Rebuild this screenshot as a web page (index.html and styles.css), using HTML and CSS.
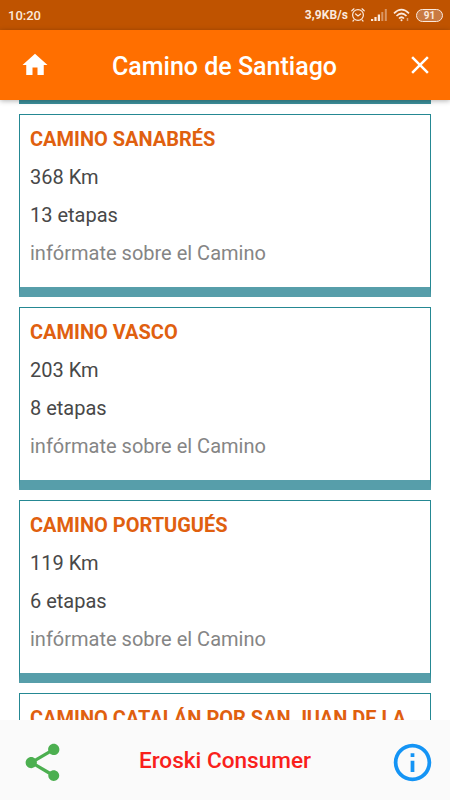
FILE: index.html
```html
<!DOCTYPE html>
<html lang="es">
<head>
<meta charset="utf-8">
<title>Camino de Santiago</title>
<link rel="stylesheet" href="styles.css">
</head>
<body>
<div class="app">
  <div class="status">
    <span class="clock">10:20</span>
    <span class="speed">3,9KB/s</span>
    <svg class="alarm" width="16" height="16" viewBox="0 0 16 16" fill="none" stroke="#fbe9dd" stroke-width="1.2" stroke-linecap="round"><circle cx="8" cy="8" r="5.4"/><path d="M1.8 3.8L4 1.8M14.2 3.8L12 1.8M3.8 13.2L3 14M12.2 13.2L13 14M5.6 7L8 9l2.6-2"/></svg>
    <svg class="signal" width="16" height="12" viewBox="0 0 16 12" fill="#fbe9dd"><path d="M0 10h2.200v2H0zM3.400 8h2.200v4H3.400zM6.800 5.500H9V12H6.800z"/><path opacity=".45" d="M10.300 3h2v9h-2zM13.800 0h2v12h-2z"/></svg>
    <svg class="wifi" width="18" height="14" viewBox="0 0 18 14" fill="none" stroke="#fbe9dd" stroke-width="1.700"><path d="M1 5.300Q8.500-2 16 5.300M3.500 8Q8.500 3 13.500 8M6 10.500Q8.500 8 11 10.500"/><circle cx="8.500" cy="12.200" r="1" fill="#fbe9dd" stroke="none"/><path opacity=".5" d="M14.500 10v3" stroke-width="1.500"/></svg>
    <span class="battery">91</span>
  </div>
  <header class="bar">
    <svg width="30" height="30" viewBox="0 0 24 24" fill="#fff"><path d="M10 20v-6h4v6h5v-8h3L12 3 2 12h3v8z"/></svg>
    <h1>Camino de Santiago</h1>
    <svg width="30" height="30" viewBox="0 0 24 24" fill="#fff"><path d="M19 6.410L17.590 5 12 10.590 6.410 5 5 6.410 10.590 12 5 17.590 6.410 19 12 13.410 17.590 19 19 17.590 13.410 12z"/></svg>
  </header>
  <main class="list">
    <div class="previous"></div>
    <section class="card"><h2>CAMINO SANABRÉS</h2><p>368 Km</p><p>13 etapas</p><p class="more">infórmate sobre el Camino</p></section>
    <section class="card"><h2>CAMINO VASCO</h2><p>203 Km</p><p>8 etapas</p><p class="more">infórmate sobre el Camino</p></section>
    <section class="card"><h2>CAMINO PORTUGUÉS</h2><p>119 Km</p><p>6 etapas</p><p class="more">infórmate sobre el Camino</p></section>
    <section class="card"><h2>CAMINO CATALÁN POR SAN JUAN DE LA</h2></section>
  </main>
  <footer class="foot">
    <svg width="45" height="45" viewBox="0 0 24 24" fill="#4caf50"><path d="M18 16.080c-.76 0-1.440.3-1.960.77L8.910 12.700c.05-.23.09-.46.09-.7s-.04-.47-.09-.7l7.050-4.110c.54.5 1.250.81 2.040.81 1.660 0 3-1.340 3-3s-1.340-3-3-3-3 1.340-3 3c0 .24.040.47.090.7L8.040 9.810C7.500 9.310 6.790 9 6 9c-1.660 0-3 1.340-3 3s1.340 3 3 3c.79 0 1.500-.31 2.040-.81l7.120 4.160c-.05.21-.08.43-.08.65 0 1.610 1.310 2.920 2.920 2.920s2.920-1.310 2.920-2.920-1.310-2.920-2.920-2.920z"/></svg>
    <strong>Eroski Consumer</strong>
    <svg width="45" height="45" viewBox="0 0 24 24" fill="#1494f5"><path d="M11 17h2v-6h-2v6zm1-15C6.480 2 2 6.480 2 12s4.480 10 10 10 10-4.480 10-10S17.520 2 12 2zm0 18c-4.410 0-8-3.590-8-8s3.590-8 8-8 8 3.590 8 8-3.590 8-8 8zM11 9h2V7h-2v2z"/></svg>
  </footer>
</div>
</body>
</html>
```
FILE: styles.css
```css
* { box-sizing: border-box; }
body { margin: 0; font-family: Roboto, sans-serif; background: #fff; }
h1, h2, p { margin: 0; }
svg { display: block; flex: none; }
.app { width: 450px; height: 800px; display: flex; flex-direction: column; overflow: hidden; }
.status { flex: none; height: 30px; background: #bf5300; color: #fbe9dd; display: flex; align-items: center; padding: 0 7px 0 8px; font-size: 13px; font-weight: 500; }
.clock { flex: 1; }
.speed { font-size: 12px; font-weight: 700; letter-spacing: .1px; }
.alarm { margin-left: 2px; }
.signal { margin-left: 5px; }
.wifi { margin-left: 6px; }
.battery { width: 27px; height: 13px; margin-left: 5px; border: 1.5px solid #fbe9dd; border-radius: 7px; background: #c97a42; font-size: 10px; font-weight: 700; line-height: 11px; text-align: center; }
.bar { flex: none; height: 70px; background: #ff6f00; color: #fff; display: flex; align-items: center; justify-content: space-between; padding: 0 15px 0 20px; z-index: 1; box-shadow: 0 1px 5px rgba(0,0,0,.3); }
.bar h1 { font-size: 25px; font-weight: 500; line-height: 30px; white-space: nowrap; padding: 3px 6px 0 0; }
.list { flex: 1; min-height: 0; overflow: hidden; padding: 0 19px; }
.previous { height: 4px; background: #3c8f9a; margin-bottom: 10px; }
.card { height: 183px; margin-bottom: 10px; border: 1px solid #258893; border-bottom: 10px solid #579eaa; padding: 5px 10px; color: #484848; font-size: 20px; line-height: 38px; white-space: nowrap; }
.card h2 { font-size: 20px; font-weight: 700; line-height: 38px; color: #e0600f; }
.more { color: #858585; }
.foot { flex: none; height: 80px; background: #fafafa; display: flex; align-items: center; justify-content: space-between; padding: 5px 15px 0 20px; }
.foot strong { font-size: 22.6px; font-weight: 500; color: #f9201b; padding: 0 5px 4px 0; }
```
